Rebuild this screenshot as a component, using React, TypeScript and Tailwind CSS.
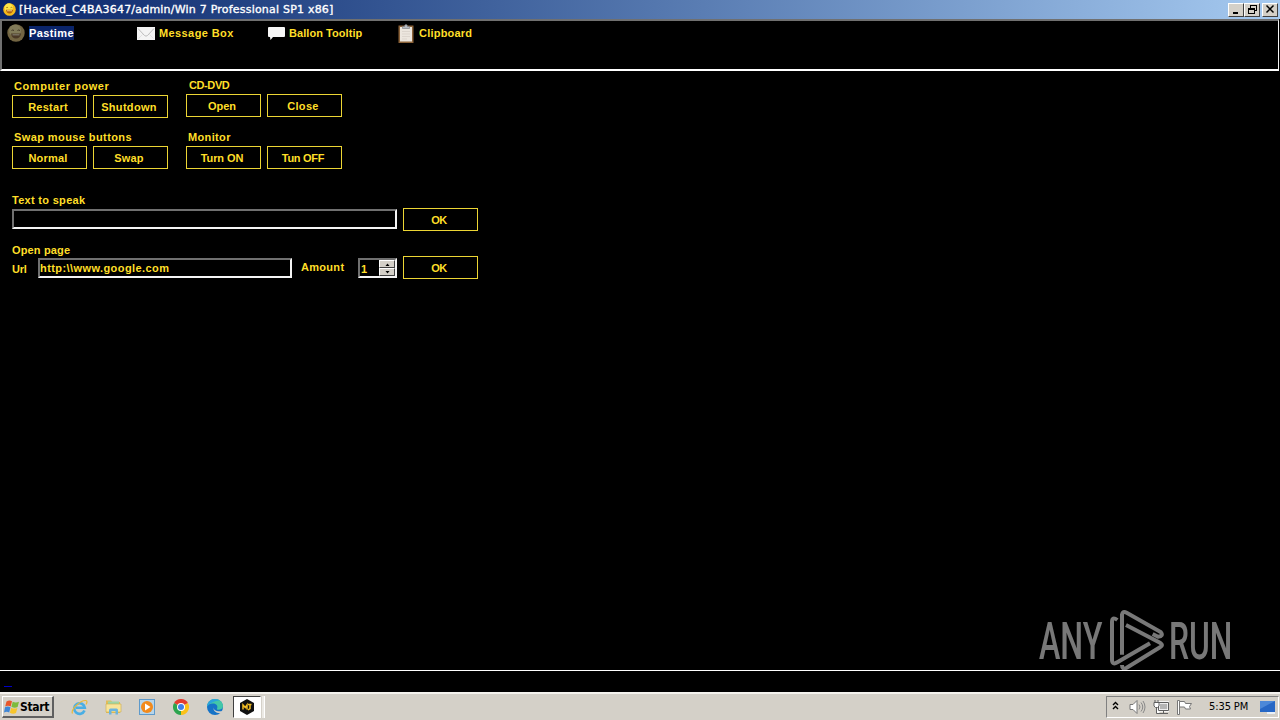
import type { ReactNode } from "react";
import { clsx } from "clsx";

function SmileyIcon({ className }: { className?: string }) {
  return (
    <svg viewBox="0 0 18 18" className={className}>
      <circle cx="9" cy="9" r="8.7" fill="#f5b818" />
      <circle cx="8" cy="6.5" r="6" fill="#ffec50" opacity=".85" />
      <path d="M4.500 6.500q1.200-1 2.500 0M10.500 6.500q1.200-1 2.500 0" fill="none" stroke="#8a5a10" strokeWidth="1" />
      <path d="M4 9.500h10q-.8 5-5 5t-5-5z" fill="#b0600c" />
      <path d="M5.500 10.200h7v1.200h-7z" fill="#f7dc9a" />
    </svg>
  );
}

function EnvelopeIcon() {
  return (
    <svg viewBox="0 0 18 13" className="h-[13px] w-[18px]">
      <rect width="18" height="13" fill="#f4f4f4" />
      <path d="M1 1.500l6.500 7q1.500 1.300 3 0L17 1.500" fill="none" stroke="#bdbdbd" />
      <path d="M1.500 11.500l4-4M16.500 11.500l-4-4" fill="none" stroke="#e2e2e2" />
    </svg>
  );
}

function BalloonIcon() {
  return (
    <svg viewBox="0 0 17 13" className="h-[13px] w-[17px]">
      <path d="M1 0h15q1 0 1 1v8q0 1-1 1H5l-2.500 3-.5-3H1Q0 10 0 9V1q0-1 1-1z" fill="#f7f7f7" />
    </svg>
  );
}

function ClipboardIcon() {
  return (
    <svg viewBox="0 0 16 19" className="h-[19px] w-4">
      <rect x=".5" y="1.500" width="15" height="17.500" fill="#8b6238" />
      <rect x="2" y="3" width="12" height="14.500" fill="#ece6de" />
      <path d="M4 7.500h8M4 10h8M4 12.500h8M4 15h5" stroke="#dcd5cd" />
      <path d="M4.500 4.500V2.500h2q0-2 1.500-2t1.500 2h2v2z" fill="#b6bcc4" stroke="#787a80" strokeWidth=".6" />
    </svg>
  );
}

function ToolbarItem({ icon, className, label }: { icon: ReactNode; className: string; label: ReactNode }) {
  return (
    <div className={clsx("flex h-[20px] items-center", className)}>
      {icon}
      {label}
    </div>
  );
}

function Button({ children, className }: { children: ReactNode; className?: string }) {
  return (
    <button
      className={clsx(
        "flex h-[23px] w-[75px] shrink-0 items-center justify-center border border-[#ecd534] pr-[3px] leading-[14px]",
        className,
      )}
    >
      {children}
    </button>
  );
}

const sunken = "border-2 border-t-[#707070] border-l-[#707070] border-r-[#f4f4f4] border-b-[#f4f4f4]";
const raised = "border border-t-white border-l-white border-r-[#404040] border-b-[#404040] bg-[#d4d0c8]";

function WindowButton({ children }: { children: ReactNode }) {
  return (
    <div className={clsx("flex h-[14px] w-4 items-center justify-center", raised)}>
      <svg viewBox="0 0 12 11" className="h-[11px] w-3 shrink-0" fill="none" stroke="#000" shapeRendering="crispEdges">
        {children}
      </svg>
    </div>
  );
}

function TitleBar() {
  return (
    <header className="flex h-[19px] items-center bg-linear-to-r from-[#0a246a] to-[#a6caf0] pr-[2px] pl-[3px]">
      <SmileyIcon className="h-[13px] w-[13px]" />
      <h1 className="ml-[3px] font-['DejaVu_Sans'] text-[11px] leading-[18px] font-normal tracking-[0.21px] whitespace-pre text-white [-webkit-text-stroke:0.35px_white]">
        [HacKed_C4BA3647/admin/Win 7 Professional SP1 x86]
      </h1>
      <div className="ml-auto flex">
        <WindowButton>
          <path d="M3 9h5" strokeWidth="2" />
        </WindowButton>
        <WindowButton>
          <path d="M4 4V1h6v5H8M4 1.500h6" />
          <path d="M2 4.500h6v5H2zM2 5.500h6" />
        </WindowButton>
        <div className="ml-[2px]">
          <WindowButton>
            <path d="M2.500 1.500l7 7M9.500 1.500l-7 7" strokeWidth="1.500" shapeRendering="auto" />
          </WindowButton>
        </div>
      </div>
    </header>
  );
}

function Toolbar() {
  return (
    <nav className="mr-px flex h-[52px] items-start border-t-2 border-r border-b-2 border-l-2 border-t-[#707070] border-r-[#f4f4f4] border-b-white border-l-[#707070] pt-[2px] pl-[5px]">
      <ToolbarItem
        className="w-[130px]"
        icon={<SmileyIcon className="h-[18px] w-[18px] opacity-55 saturate-40" />}
        label={<span className="ml-[4px] bg-[#0a246a] leading-[14px] tracking-[0.4px] text-white">Pastime</span>}
      />
      <ToolbarItem
        className="w-[131px]"
        icon={<EnvelopeIcon />}
        label={<span className="ml-[4px] tracking-[0.4px]">Message Box</span>}
      />
      <ToolbarItem
        className="w-[130px]"
        icon={<BalloonIcon />}
        label={<span className="ml-[4px] tracking-[0.06px]">Ballon Tooltip</span>}
      />
      <ToolbarItem
        className="w-[130px]"
        icon={<ClipboardIcon />}
        label={<span className="ml-[5px] tracking-[0.22px]">Clipboard</span>}
      />
    </nav>
  );
}

function Controls() {
  return (
    <main className="h-[599px] pl-[12px] leading-[14px]">
      <div className="flex gap-[18px]">
        <div className="w-[156px] pt-[8px]">
          <div className="h-[16px] pl-[2px] tracking-[0.57px]">Computer power</div>
          <div className="flex gap-[6px]">
            <Button className="tracking-[0.25px]">Restart</Button>
            <Button className="tracking-[0.3px]">Shutdown</Button>
          </div>
          <div className="mt-[12px] h-[16px] pl-[2px] tracking-[0.41px]">Swap mouse buttons</div>
          <div className="flex gap-[6px]">
            <Button className="tracking-[0.2px]">Normal</Button>
            <Button className="tracking-[0.2px]">Swap</Button>
          </div>
        </div>
        <div className="w-[156px] pt-[7px]">
          <div className="h-[16px] pl-[3px] tracking-[-0.4px]">CD-DVD</div>
          <div className="flex gap-[6px]">
            <Button>Open</Button>
            <Button className="tracking-[0.3px]">Close</Button>
          </div>
          <div className="mt-[13px] h-[16px] pl-[2px] tracking-[0.35px]">Monitor</div>
          <div className="flex gap-[6px]">
            <Button className="tracking-[-0.1px]">Turn ON</Button>
            <Button className="tracking-[-0.3px]">Tun OFF</Button>
          </div>
        </div>
      </div>

      <div className="mt-[24px] h-[15px] tracking-[0.3px]">Text to speak</div>
      <div className="flex items-start gap-[6px]">
        <div className={clsx("mt-px h-[20px] w-[385px]", sunken)} />
        <Button className="tracking-[-0.6px]">OK</Button>
      </div>

      <div className="mt-[12px] h-[13px] tracking-[0.15px]">Open page</div>
      <div className="flex items-start">
        <span className="w-[26px] pt-[6px] tracking-[-0.2px]">Url</span>
        <div className={clsx("mt-[2px] h-[20px] w-[254px] leading-[16px] tracking-[0.42px]", sunken)}>
          http:\\www.google.com
        </div>
        <span className="ml-[9px] w-[57px] pt-[4px] tracking-[0.3px]">Amount</span>
        <div className={clsx("mt-[2px] flex h-[20px] w-[39px] justify-between", sunken)}>
          <span className="pl-px leading-[18px]">1</span>
          <div className="w-4">
            <div className={clsx("flex h-2 items-center justify-center", raised)}>
              <svg viewBox="0 0 5 3" className="h-[3px] w-[5px]">
                <path d="M.5 3h4L2.500 .5z" />
              </svg>
            </div>
            <div className={clsx("flex h-2 items-center justify-center", raised)}>
              <svg viewBox="0 0 5 3" className="h-[3px] w-[5px]">
                <path d="M.5 0h4L2.500 2.500z" />
              </svg>
            </div>
          </div>
        </div>
        <Button className="ml-[6px] tracking-[-0.6px]">OK</Button>
      </div>
    </main>
  );
}

function WindowsFlag() {
  return (
    <svg viewBox="0 0 16 16" className="h-4 w-4">
      <path d="M2.500 2.500q3-2 5.500-.2L6.700 7.500q-2.700-1.500-5.500 0z" fill="#e8562a" />
      <path d="M8.700 2.800q3 1.500 6.300 0L13.600 8q-3 1.500-6.200-.2z" fill="#7dbb3c" />
      <path d="M1 8.300q2.800-1.500 5.500 0L5.200 13.500Q2.800 12 0 13.500z" fill="#3f86d6" />
      <path d="M7.200 8.700q3 1.600 6.200.2L12 14q-3 1.500-6.100-.2z" fill="#f7c52c" />
    </svg>
  );
}

function ExplorerIcon() {
  return (
    <svg viewBox="0 0 17 17" className="h-[17px] w-[17px]" fill="none">
      <path d="M13.500 11.500A5.300 5.300 0 1 1 13.800 8.700H5" stroke="#49aee4" strokeWidth="2.600" />
      <path d="M1.500 14.500C-.5 11 9 1 15 1.500c1.500.5 1 2.500 0 4" stroke="#e8b93a" strokeWidth="1.200" />
    </svg>
  );
}

function FolderIcon() {
  return (
    <svg viewBox="0 0 17 16" className="h-4 w-[17px]">
      <path d="M1 1.500h5L7.500 3H15v11H1z" fill="#e2bd58" />
      <path d="M3 2.500h11v4H3z" fill="#9ed5a3" />
      <path d="M1 5h15v8H1z" fill="#f8e49a" stroke="#cfac4c" strokeWidth=".6" />
      <path d="M4 15.500V11q0-1.500 1.500-1.500h6q1.500 0 1.500 1.500v4.500h-2.500V12h-4v3.500z" fill="#6cb4de" />
    </svg>
  );
}

function MediaIcon() {
  return (
    <svg viewBox="0 0 16 16" className="h-4 w-4">
      <rect x=".5" y=".5" width="15" height="15" fill="#b7d5ea" stroke="#5e9acb" />
      <circle cx="8" cy="8" r="6" fill="#f28a1c" />
      <path d="M6 4.500v7L11.500 8z" fill="#fff" />
    </svg>
  );
}

function ChromeIcon() {
  return (
    <svg viewBox="0 0 16 16" className="h-4 w-4">
      <path d="M8 8L1.070 4A8 8 0 0 1 14.930 4z" fill="#e33b2e" />
      <path d="M8 8L14.930 4A8 8 0 0 1 8 16z" fill="#fbc117" />
      <path d="M8 8v8A8 8 0 0 1 1.070 4z" fill="#2da44e" />
      <circle cx="8" cy="8" r="4" fill="#fff" />
      <circle cx="8" cy="8" r="3" fill="#3f7fe8" />
    </svg>
  );
}

function EdgeIcon() {
  return (
    <svg viewBox="0 0 16 16" className="h-4 w-4">
      <circle cx="8" cy="8" r="8" fill="#1673c7" />
      <path d="M0 7.500C.5 3 4 0 8 0c5 0 8 3.500 8 7 0 2.500-2 3.700-4.500 3.700-1.500 0-2-.7-1.300-1.500C11 7 9.500 4.500 6 4.500c-3 0-5 1.200-6 3z" fill="#43c7a8" />
      <path d="M0 7.500C.5 3 4 0 8 0q2.500 0 4.500 1.500Q5 2 0 7.500z" fill="#2ba4dc" />
      <path d="M7 7.500c-1.500 3.500 2.500 5.500 9 4.500l-1.500 2C10 15 5 12 7 7.500z" fill="#d4d0c8" />
    </svg>
  );
}

function AppIcon() {
  return (
    <svg viewBox="0 0 16 16" className="h-4 w-4">
      <path d="M8 0l7 4v8l-7 4-7-4V4z" fill="#111" />
      <path d="M4 10.500V6l2.300 2.500L8 6v4.500M9 5.500h3.500M11 5.500v4L9 11" fill="none" stroke="#f2bd24" strokeWidth="1.500" />
    </svg>
  );
}

function TrayIcons() {
  return (
    <>
      <svg viewBox="0 0 7 9" className="mb-[3px] h-[9px] w-[7px]" fill="none" stroke="#000" strokeWidth="1.400">
        <path d="M1 4l2.500-2.500L6 4M1 8l2.500-2.500L6 8" />
      </svg>
      <svg viewBox="0 0 17 14" className="ml-[10px] h-[14px] w-[17px]" fill="none" stroke="#888">
        <path d="M1 4.500h3l4-4v13l-4-4H1z" fill="#fff" stroke="#777" />
        <path d="M10 4.500q2 2.500 0 5M12 2.500q3.500 4.500 0 9M14 1q4 6 0 12" />
      </svg>
      <svg viewBox="0 0 16 16" className="ml-[7px] h-4 w-4" fill="none" stroke="#606060">
        <path d="M5.500 3.500h10v8h-10z" fill="#b5b5b5" stroke="#fff" strokeWidth="2.500" />
        <path d="M5.500 3.500h10v8h-10zM6 14.500h9M10.500 12v2" />
        <path d="M1 3.500h5V7L4.500 8.500h-2L1 7zM2 1v2M5 1v2M3.500 9v5.500H7" fill="#fff" />
      </svg>
      <svg viewBox="0 0 16 15" className="ml-[8px] h-[15px] w-4" fill="#fff" stroke="#777">
        <path d="M.5.5h2v14h-2z" />
        <path d="M2.500 1.500h5l1 2h6l-2 3 1 2.500H8.500l-1-2h-5z" />
      </svg>
    </>
  );
}

function Taskbar() {
  return (
    <footer className="flex h-7 items-center border-t-2 border-t-[#f4f2ee] bg-[#d4d0c8] pl-[2px] text-black">
      <button
        className={clsx(
          "flex h-[22px] w-[52px] items-center pl-px font-['DejaVu_Sans_Condensed','DejaVu_Sans'] text-[12px] tracking-[-0.35px]",
          "border-t border-r-2 border-b-2 border-l border-t-white border-r-[#606060] border-b-[#606060] border-l-white",
        )}
      >
        <WindowsFlag />
        <span className="leading-[18px]">Start</span>
      </button>
      <div className="ml-[17px] flex items-center">
        <ExplorerIcon />
        <div className="ml-[17px]">
          <FolderIcon />
        </div>
        <div className="ml-[17px]">
          <MediaIcon />
        </div>
        <div className="ml-[18px]">
          <ChromeIcon />
        </div>
        <div className="ml-[18px]">
          <EdgeIcon />
        </div>
      </div>
      <div className="ml-[10px] flex h-[22px] w-[28px] items-center justify-center border border-t-[#404040] border-r-white border-b-white border-l-[#404040] bg-white">
        <AppIcon />
      </div>
      <div className="ml-px h-[22px] w-[3px] border-r border-r-white bg-[#ebe9e4]" />
      <div className="mr-px ml-auto flex h-[22px] w-[173px] items-center border border-t-[#808080] border-r-white border-b-white border-l-[#808080] pl-[5px]">
        <TrayIcons />
        <span className="ml-[16px] w-[51px] font-['DejaVu_Sans_Condensed','DejaVu_Sans'] text-[11px] font-normal tracking-[-0.1px] whitespace-nowrap">
          5:35 PM
        </span>
        <svg viewBox="0 0 16 14" className="h-[14px] w-4 shrink-0">
          <rect y="1" width="15" height="11" fill="#2767c5" />
          <path d="M0 1h15L0 9z" fill="#4c88d8" />
          <path d="M7 12h8v2H7z" fill="#e9f0f8" />
        </svg>
      </div>
    </footer>
  );
}

function Watermark() {
  return (
    <svg
      viewBox="0 0 630 225"
      className="absolute top-[600px] left-[1030px] h-[75px] w-[210px] overflow-visible opacity-50"
    >
      <g fill="#efefef" fontFamily="Roboto, sans-serif" fontSize="153" fontWeight="500">
        <text x="27" y="178" textLength="190" lengthAdjust="spacingAndGlyphs">
          ANY
        </text>
        <text x="417" y="178" textLength="190" lengthAdjust="spacingAndGlyphs">
          RUN
        </text>
      </g>
      <g fill="none" stroke="#efefef" strokeWidth="12">
        <path d="M262 60Q246 48 246 66V180Q247 196 262 187L360 130" />
        <path d="M276 164V44Q278 32 290 38L392 96Q402 108 384 110L368 102" />
        <path d="M288 75L390 128Q402 135 390 142L290 203Q276 211 276 195" />
      </g>
    </svg>
  );
}

export default function App() {
  return (
    <div className="relative h-[720px] w-[1280px] overflow-hidden bg-black font-['Liberation_Sans',sans-serif] text-[11px] font-bold whitespace-nowrap text-[#ffdf28]">
      <TitleBar />
      <Toolbar />
      <Controls />
      <div className="h-[22px] border-t border-t-white pt-[15px] pl-[4px]">
        <div className="h-px w-[8px] bg-[#0000c8]" />
      </div>
      <Taskbar />
      <Watermark />
    </div>
  );
}
